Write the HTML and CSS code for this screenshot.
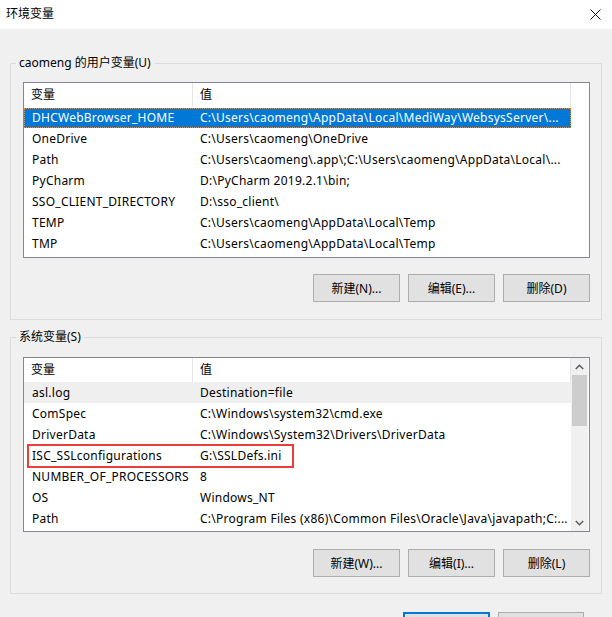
FILE: index.html
```html
<!DOCTYPE html>
<html lang="zh-CN">
<head>
<meta charset="utf-8">
<title>环境变量</title>
<link rel="stylesheet" href="styles.css">
</head>
<body>
<div class="window">
  <div class="titlebar">
    <span class="title">环境变量</span>
    <svg class="close" width="11" height="11" viewBox="0 0 11 11"><path d="M0.5 0.5 L10.5 10.5 M10.5 0.5 L0.5 10.5" stroke="#111" stroke-width="1" fill="none"/></svg>
  </div>

  <fieldset class="group group-user">
    <legend>caomeng 的用户变量(U)</legend>
    <div class="group-body">
      <div class="list list-user">
        <div class="list-main">
          <div class="row header"><div class="c1">变量</div><div class="c2">值</div></div>
          <div class="row selected"><div class="c1">DHCWebBrowser_HOME</div><div class="c2">C:\Users\caomeng\AppData\Local\MediWay\WebsysServer\...</div></div>
          <div class="row"><div class="c1">OneDrive</div><div class="c2">C:\Users\caomeng\OneDrive</div></div>
          <div class="row"><div class="c1">Path</div><div class="c2">C:\Users\caomeng\.app\;C:\Users\caomeng\AppData\Local\...</div></div>
          <div class="row"><div class="c1">PyCharm</div><div class="c2">D:\PyCharm 2019.2.1\bin;</div></div>
          <div class="row"><div class="c1">SSO_CLIENT_DIRECTORY</div><div class="c2">D:\sso_client\</div></div>
          <div class="row"><div class="c1">TEMP</div><div class="c2">C:\Users\caomeng\AppData\Local\Temp</div></div>
          <div class="row"><div class="c1">TMP</div><div class="c2">C:\Users\caomeng\AppData\Local\Temp</div></div>
        </div>
        <div class="list-filler"></div>
      </div>
      <div class="buttons">
        <button class="btn">新建(N)...</button>
        <button class="btn">编辑(E)...</button>
        <button class="btn">删除(D)</button>
      </div>
    </div>
  </fieldset>

  <fieldset class="group group-sys">
    <legend>系统变量(S)</legend>
    <div class="group-body">
      <div class="list list-sys">
        <div class="list-main">
          <div class="row header"><div class="c1">变量</div><div class="c2">值</div></div>
          <div class="row hover"><div class="c1">asl.log</div><div class="c2">Destination=file</div></div>
          <div class="row"><div class="c1">ComSpec</div><div class="c2">C:\Windows\system32\cmd.exe</div></div>
          <div class="row"><div class="c1">DriverData</div><div class="c2">C:\Windows\System32\Drivers\DriverData</div></div>
          <div class="row"><div class="c1">ISC_SSLconfigurations</div><div class="c2">G:\SSLDefs.ini</div></div>
          <div class="row"><div class="c1">NUMBER_OF_PROCESSORS</div><div class="c2">8</div></div>
          <div class="row"><div class="c1">OS</div><div class="c2">Windows_NT</div></div>
          <div class="row"><div class="c1">Path</div><div class="c2">C:\Program Files (x86)\Common Files\Oracle\Java\javapath;C:...</div></div>
        </div>
        <div class="scrollbar">
          <div class="sb-arrow"><svg width="9" height="6" viewBox="0 0 9 6"><path d="M0.8 5 L4.5 1.3 L8.2 5" stroke="#606060" stroke-width="1.6" fill="none"/></svg></div>
          <div class="sb-thumb"></div>
          <div class="sb-track"></div>
          <div class="sb-arrow"><svg width="9" height="6" viewBox="0 0 9 6"><path d="M0.8 1 L4.5 4.7 L8.2 1" stroke="#606060" stroke-width="1.6" fill="none"/></svg></div>
        </div>
        <div class="highlight"></div>
      </div>
      <div class="buttons buttons-sys">
        <button class="btn">新建(W)...</button>
        <button class="btn">编辑(I)...</button>
        <button class="btn">删除(L)</button>
      </div>
    </div>
  </fieldset>

  <div class="dialog-buttons">
    <button class="btn btn-default" aria-label="确定"></button>
    <button class="btn btn-cancel" aria-label="取消"></button>
  </div>
</div>
</body>
</html>
```

FILE: styles.css
```css
* { box-sizing: border-box; }

html, body {
  margin: 0;
  padding: 0;
}

body {
  width: 612px;
  height: 617px;
  overflow: hidden;
  background: #f0f0f0;
  font-family: "Noto Sans", "Noto Sans CJK SC", sans-serif;
  font-size: 12px;
  color: #000;
}

.window {
  width: 612px;
  height: 617px;
  overflow: hidden;
}

.titlebar {
  height: 29px;
  background: #fff;
  display: flex;
  align-items: center;
  justify-content: space-between;
  padding: 0 11px 1px 6px;
}

.title {
  font-size: 12px;
  line-height: 16px;
}

.close { display: block; }

.group {
  margin: 0 10px 0 10px;
  padding: 0;
  border: 1px solid #dcdcdc;
  min-inline-size: 0;
}

.group-user { margin-top: 26px; }
.group-sys { margin-top: 9px; }

.group legend {
  margin-left: 5px;
  padding: 0 3px;
  line-height: 16px;
  font-size: 12px;
}

.group-body {
  padding: 11px 11px 17px 12px;
}

.group-sys .group-body {
  padding: 12px 11px 16px 12px;
}

.list {
  position: relative;
  display: flex;
  background: #fff;
  border: 1px solid #828790;
  overflow: hidden;
}

.list-user { height: 176px; }
.list-sys { height: 175px; }

.list-main {
  flex: 0 0 547px;
  display: flex;
  flex-direction: column;
}

.list-filler { flex: 1; }

.row {
  display: flex;
  height: 21px;
  line-height: 21px;
  white-space: nowrap;
  letter-spacing: 0.25px;
}

.row .c1 {
  flex: 0 0 169px;
  padding-left: 8px;
  overflow: hidden;
}

.row .c2 {
  flex: 1;
  padding-left: 7px;
  overflow: hidden;
}

.row.header {
  height: 24px;
  line-height: 23px;
  letter-spacing: 0;
}

.row.header .c1 {
  padding-left: 7px;
  border-right: 1px solid #e5e5e5;
}

.row.header .c2 {
  border-right: 1px solid #e5e5e5;
}

.row.selected {
  margin-top: 1px;
  height: 20px;
  line-height: 19px;
  background: #0078d7;
  color: #fff;
  outline: 1px dotted #f08a2a;
  outline-offset: -1px;
}

.row.hover { background: #efefef; }

.scrollbar {
  flex: 0 0 17px;
  display: flex;
  flex-direction: column;
  background: #f0f0f0;
}

.sb-arrow {
  height: 17px;
  display: flex;
  align-items: center;
  justify-content: center;
}

.sb-thumb {
  height: 51px;
  margin: 0 1px;
  background: #cdcdcd;
}

.sb-track { flex: 1; }

.highlight {
  position: absolute;
  left: 3px;
  top: 86px;
  width: 267px;
  height: 24px;
  border: 2px solid #ee3b3b;
}

.buttons {
  display: flex;
  justify-content: flex-end;
  gap: 8px;
  margin-top: 16px;
}

.buttons-sys { margin-top: 17px; }

.btn {
  width: 87px;
  height: 28px;
  padding: 0;
  background: #e1e1e1;
  border: 1px solid #adadad;
  font-family: "Noto Sans", "Noto Sans CJK SC", sans-serif;
  font-size: 12px;
  color: #000;
}

.dialog-buttons {
  display: flex;
  justify-content: flex-end;
  gap: 8px;
  margin-top: 18px;
  padding-right: 28px;
}

.btn-default {
  border: 2px solid #0078d7;
}

.btn-cancel { width: 86px; }
```
